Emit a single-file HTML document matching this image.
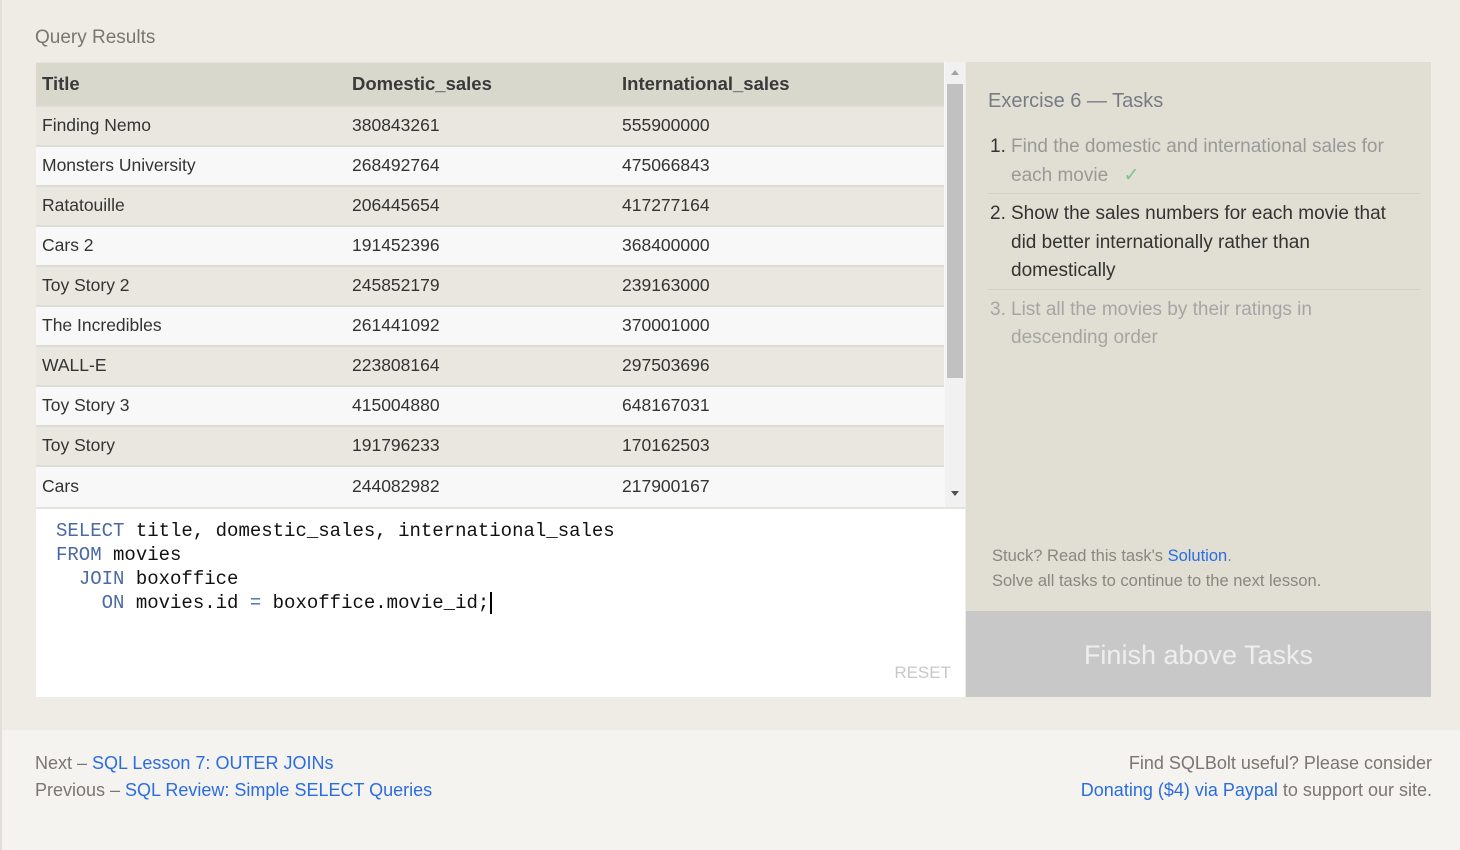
<!DOCTYPE html>
<html><head><meta charset="utf-8"><style>
*{margin:0;padding:0;box-sizing:border-box}
body{width:1460px;height:850px;overflow:hidden;background:#f5f3ef;font-family:"Liberation Sans",sans-serif;position:relative}
#main{position:absolute;left:2px;top:0;width:1458px;height:730px;background:#efece5}
#edge{position:absolute;left:0;top:0;width:2px;height:850px;background:#e2ded8}
.h{position:absolute;left:35px;top:27px;font-size:19px;color:#7a7670}
#tbl{position:absolute;left:36px;top:62px;width:929px;height:445px;background:#f8f8f8;overflow:hidden}
table{border-collapse:collapse;width:908px;font-size:17.5px;color:#333}
th{background:#d9d8cd;text-align:left;height:43px;font-weight:bold;font-size:18.5px;color:#3a3a3a;padding-left:6px;border-top:1px solid #e6e4da}
td{height:40px;padding-left:6px;border-top:2px solid #dddcd4}
tr:nth-child(even) td{background:#e9e7df}
tr:nth-child(odd) td{background:#f8f8f8}
#sb{position:absolute;left:909px;top:0;width:20px;height:445px;background:#f1f1f1}
#thumb{position:absolute;left:2px;top:22px;width:16px;height:294px;background:#c1c1c1}
#ed{position:absolute;left:36px;top:507px;width:929px;height:190px;background:#fff;border-top:2px solid #e5e3dd;font-family:"Liberation Mono",monospace;font-size:19px;line-height:24px;color:#111;padding:10px 0 0 20px;white-space:pre}
.k{color:#4a6aa5}
#reset{position:absolute;right:14px;bottom:12px;font-family:"Liberation Sans",sans-serif;font-size:17px;color:#c8c8c8}
#rp{position:absolute;left:966px;top:62px;width:465px;height:549px;background:#e1dfd4}
#rp h3{position:absolute;left:22px;top:28px;font-weight:normal;font-size:20px;color:#777c84}
ol{position:absolute;left:22px;top:70px;width:432px;list-style:none;font-size:19px;line-height:28.5px}
li{padding:1px 30px 3px 23px;position:relative;border-bottom:1px solid #d2d0c6;margin-bottom:5px}
li:last-child{border:none}
li span.n{position:absolute;left:2px}
.done{color:#999}
.cur{color:#333}
.todo{color:#a5a5a5}
#stuck{position:absolute;left:26px;top:482px;font-size:16.5px;line-height:25px;color:#8a8680}
a{color:#2a6de0;text-decoration:none}
#btn{position:absolute;left:966px;top:611px;width:465px;height:86px;background:#c8c8c8;color:#eee;font-size:27px;text-align:center;line-height:88px}
#fl{position:absolute;left:35px;top:750px;font-size:18px;line-height:27px;color:#7a7670}
#fr{position:absolute;right:28px;top:750px;font-size:18px;line-height:27px;color:#7a7670;text-align:right}
</style></head><body>
<div id="main"></div><div id="edge"></div>
<div class="h">Query Results</div>
<div id="tbl"><table>
<tr><th style="width:310px">Title</th><th style="width:270px">Domestic_sales</th><th>International_sales</th></tr>
<tr><td>Finding Nemo</td><td>380843261</td><td>555900000</td></tr>
<tr><td>Monsters University</td><td>268492764</td><td>475066843</td></tr>
<tr><td>Ratatouille</td><td>206445654</td><td>417277164</td></tr>
<tr><td>Cars 2</td><td>191452396</td><td>368400000</td></tr>
<tr><td>Toy Story 2</td><td>245852179</td><td>239163000</td></tr>
<tr><td>The Incredibles</td><td>261441092</td><td>370001000</td></tr>
<tr><td>WALL-E</td><td>223808164</td><td>297503696</td></tr>
<tr><td>Toy Story 3</td><td>415004880</td><td>648167031</td></tr>
<tr><td>Toy Story</td><td>191796233</td><td>170162503</td></tr>
<tr><td>Cars</td><td>244082982</td><td>217900167</td></tr>
</table>
<div id="sb"><div style="position:absolute;left:6px;top:8px;border:4px solid transparent;border-bottom:5px solid #a3a3a3;border-top:0"></div><div id="thumb"></div><div style="position:absolute;left:6px;top:429px;border:4px solid transparent;border-top:5px solid #505050;border-bottom:0"></div></div>
</div>
<div id="ed"><span class="k">SELECT</span> title, domestic_sales, international_sales
<span class="k">FROM</span> movies
  <span class="k">JOIN</span> boxoffice
    <span class="k">ON</span> movies.id <span class="k">=</span> boxoffice.movie_id;<span style="border-left:2px solid #000;margin-left:1px"></span><div id="reset">RESET</div></div>
<div id="rp"><h3>Exercise 6 — Tasks</h3>
<ol>
<li class="done"><span class="n" style="color:#333">1.</span>Find the domestic and international sales for each movie <span style="color:#7cc487;margin-left:10px">✓</span></li>
<li class="cur"><span class="n">2.</span>Show the sales numbers for each movie that did better internationally rather than domestically</li>
<li class="todo"><span class="n">3.</span>List all the movies by their ratings in descending order</li>
</ol>
<div id="stuck">Stuck? Read this task's <a>Solution</a>.<br>Solve all tasks to continue to the next lesson.</div>
</div>
<div id="btn">Finish above Tasks</div>
<div id="fl">Next – <a>SQL Lesson 7: OUTER JOINs</a><br>Previous – <a>SQL Review: Simple SELECT Queries</a></div>
<div id="fr">Find SQLBolt useful? Please consider<br><a>Donating ($4) via Paypal</a> to support our site.</div>
</body></html>
